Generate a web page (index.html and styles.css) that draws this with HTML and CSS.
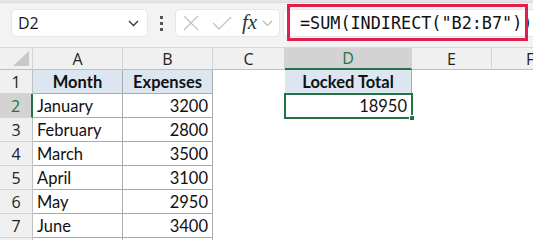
FILE: index.html
```html
<!DOCTYPE html>
<html>
<head>
<meta charset="utf-8">
<link rel="stylesheet" href="styles.css">
</head>
<body>
<div class="topstrip"></div>
<div class="toolbar">
  <div class="namebox">
    <span class="name">D2</span>
    <svg class="chev" width="11" height="7" viewBox="0 0 11 7"><path d="M1 1 L5.5 5.5 L10 1" fill="none" stroke="#333" stroke-width="1.3"/></svg>
  </div>
  <div class="dots"><i></i><i></i><i></i></div>
  <div class="iconbox">
    <svg width="16" height="16" viewBox="0 0 16 16"><path d="M1 1 L15 15 M15 1 L1 15" stroke="#c4c4c4" stroke-width="1.4" fill="none"/></svg>
    <svg width="20" height="14" viewBox="0 0 20 14"><path d="M1 7 L7 13 L19 1" stroke="#c4c4c4" stroke-width="1.4" fill="none"/></svg>
    <span class="fx">fx</span>
    <svg class="smallchev" width="11" height="7" viewBox="0 0 11 7"><path d="M1 1 L5.5 5.5 L10 1" fill="none" stroke="#b8b8b8" stroke-width="1.2"/></svg>
  </div>
  <div class="formula">
    <span class="ftext">=SUM(INDIRECT("B2:B7"))</span>
    <div class="highlight"></div>
  </div>
</div>
<div class="sheet">
  <div class="corner"><span class="tri"></span></div>
  <div class="ch">A</div>
  <div class="ch">B</div>
  <div class="ch">C</div>
  <div class="ch sel">D</div>
  <div class="ch">E</div>
  <div class="ch last">F</div>

  <div class="rh">1</div>
  <div class="c hdr">Month</div>
  <div class="c hdr">Expenses</div>
  <div class="c e"></div>
  <div class="c hdr">Locked Total</div>
  <div class="c e"></div>
  <div class="c e"></div>

  <div class="rh sel">2</div>
  <div class="c">January</div>
  <div class="c num">3200</div>
  <div class="c e"></div>
  <div class="c num active">18950<span class="handle"></span></div>
  <div class="c e"></div>
  <div class="c e"></div>

  <div class="rh">3</div>
  <div class="c">February</div>
  <div class="c num">2800</div>
  <div class="c e"></div><div class="c e"></div><div class="c e"></div><div class="c e"></div>

  <div class="rh">4</div>
  <div class="c">March</div>
  <div class="c num">3500</div>
  <div class="c e"></div><div class="c e"></div><div class="c e"></div><div class="c e"></div>

  <div class="rh">5</div>
  <div class="c">April</div>
  <div class="c num">3100</div>
  <div class="c e"></div><div class="c e"></div><div class="c e"></div><div class="c e"></div>

  <div class="rh">6</div>
  <div class="c">May</div>
  <div class="c num">2950</div>
  <div class="c e"></div><div class="c e"></div><div class="c e"></div><div class="c e"></div>

  <div class="rh">7</div>
  <div class="c">June</div>
  <div class="c num">3400</div>
  <div class="c e"></div><div class="c e"></div><div class="c e"></div><div class="c e"></div>

  <div class="rh end"></div>
  <div class="c end"></div>
  <div class="c end"></div>
  <div class="c e"></div><div class="c e"></div><div class="c e"></div><div class="c e"></div>
</div>
</body>
</html>
```
FILE: styles.css
```css
* { box-sizing: border-box; }
html, body { margin: 0; padding: 0; }
body {
  width: 533px;
  height: 240px;
  overflow: hidden;
  background: #fff;
  font-family: "Lato", "Noto Sans", sans-serif;
}
.topstrip {
  height: 3px;
  background: #e4e4e4;
  border-bottom: 1px solid #dcdcdc;
}
.toolbar {
  height: 44px;
  background: #f3f3f3;
  display: flex;
  align-items: flex-start;
  padding-top: 6px;
  position: relative;
}
.namebox {
  margin-left: 11px;
  width: 137px;
  height: 28px;
  background: #fff;
  border-radius: 5px;
  border: 1px solid #e6e6e6;
  display: flex;
  align-items: center;
  justify-content: space-between;
  padding: 0 7px 0 6px;
}
.name {
  font-family: "Open Sans", "Noto Sans", sans-serif;
  font-size: 16px;
  color: #1a1a1a;
}
.chev { margin-right: 1px; }
.dots {
  width: 27px;
  height: 28px;
  display: flex;
  flex-direction: column;
  align-items: center;
  justify-content: center;
  gap: 3px;
}
.dots i {
  display: block;
  width: 3px;
  height: 3px;
  background: #555;
}
.iconbox {
  width: 105px;
  height: 28px;
  background: #fff;
  border-radius: 5px;
  border: 1px solid #e6e6e6;
  display: flex;
  align-items: center;
  padding-left: 7px;
}
.iconbox svg:nth-child(1) { margin-right: 13px; }
.iconbox svg:nth-child(2) { margin-right: 10px; }
.fx {
  font-family: "Liberation Serif", "DejaVu Serif", serif;
  font-style: italic;
  font-size: 21px;
  color: #333;
  margin-right: 5px;
  line-height: 1;
  margin-top: -2px;
}
.formula {
  margin-left: 3px;
  flex: 1;
  height: 28px;
  background: #fff;
  border-radius: 5px 0 0 5px;
  border: 1px solid #e6e6e6;
  border-right: none;
  display: flex;
  align-items: center;
  padding-left: 16px;
  overflow: hidden;
  white-space: nowrap;
}
.ftext {
  font-family: "DejaVu Sans Mono", "Liberation Mono", monospace;
  font-size: 16.8px;
  color: #111;
}
.highlight {
  position: absolute;
  left: 287px;
  top: 1px;
  width: 241px;
  height: 37px;
  border: 3.5px solid #e0204a;
  background: transparent;
}
.sheet {
  display: grid;
  grid-template-columns: 33px 90px 90px 72px 127px 80px 41px;
  grid-template-rows: 23px repeat(7, 24px) 2px;
  font-size: 16.5px;
  color: #111;
}
.corner {
  background: #f0f0f0;
  border-right: 1px solid #d4d4d4;
  border-bottom: 1px solid #bfbfbf;
  border-top: 1px solid #d8d8d8;
  position: relative;
}
.tri {
  position: absolute;
  right: 3px;
  bottom: 3px;
  width: 0;
  height: 0;
  border-left: 16px solid transparent;
  border-bottom: 15px solid #c8c8c8;
}
.ch {
  background: #f0f0f0;
  border-top: 1px solid #d8d8d8;
  border-right: 1px solid #d4d4d4;
  border-bottom: 1px solid #bfbfbf;
  display: flex;
  align-items: center;
  justify-content: center;
  font-family: "Open Sans", "Noto Sans", sans-serif;
  font-size: 16px;
  color: #222;
}
.ch.last { justify-content: flex-start; padding-left: 34px; border-right: none; }
.ch.sel {
  background: #d3d3d3;
  border-bottom: 2px solid #217346;
  color: #217346;
}
.rh {
  background: #f0f0f0;
  border-right: 1px solid #bfbfbf;
  border-bottom: 1px solid #d4d4d4;
  display: flex;
  align-items: center;
  justify-content: center;
  font-family: "Open Sans", "Noto Sans", sans-serif;
  font-size: 16px;
  color: #222;
}
.rh.sel {
  background: #d3d3d3;
  border-right: 2px solid #217346;
  color: #217346;
}
.rh.end { border-bottom: none; }
.c {
  border-right: 1px solid #ababab;
  border-bottom: 1px solid #ababab;
  display: flex;
  align-items: center;
  padding: 0 4px;
  white-space: nowrap;
  position: relative;
}
.c.end { border-bottom: none; }
.c.e { border: none; }
.c.hdr {
  background: #dce6f1;
  font-weight: 700;
  justify-content: center;
}
.c.num { justify-content: flex-end; }
.active {
  outline: 2px solid #217346;
  outline-offset: -1px;
}
.handle {
  position: absolute;
  right: -4px;
  bottom: -4px;
  width: 6px;
  height: 6px;
  background: #217346;
  border: 1px solid #fff;
}
```
